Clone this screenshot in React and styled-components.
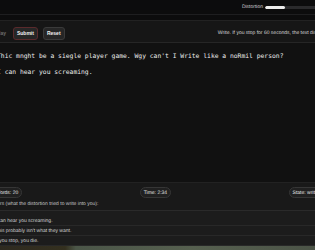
import React from 'react';
import styled, { createGlobalStyle } from 'styled-components';

const GlobalStyle = createGlobalStyle`
  html, body {
    margin: 0;
    padding: 0;
    background: #0c0c0d;
    overflow: hidden;
  }
  body {
    font-family: 'Liberation Sans', Arial, sans-serif;
    color: #e6e6e6;
    text-rendering: geometricPrecision;
  }
`;

const Viewport = styled.div`
  width: 315px;
  height: 250px;
  overflow: hidden;
`;

const Page = styled.div`
  width: 355px;
  margin-left: -20px;
  display: flex;
  flex-direction: column;
`;

const Header = styled.header`
  height: 15px;
  box-sizing: border-box;
  display: flex;
  align-items: center;
  justify-content: flex-end;
  border-bottom: 1px solid #1e1e20;
`;

const DialLabel = styled.span`
  font-size: 5px;
  color: #cfcfcf;
  margin-right: 2px;
`;

const Track = styled.div`
  width: 70px;
  height: 3px;
  border-radius: 2px;
  background: #2a2a2c;
  overflow: hidden;
`;

const Fill = styled.div`
  height: 100%;
  border-radius: 2px;
  background: #ececec;
`;

const Panel = styled.main`
  margin-top: 5px;
  border-top: 1px solid #222;
  background: #111111;
  display: flex;
  flex-direction: column;
`;

const Toolbar = styled.div`
  height: 22px;
  box-sizing: border-box;
  display: flex;
  align-items: center;
  gap: 5px;
  padding: 3.5px 3px 0 13.7px;
  background: #161616;
  border-bottom: 1px solid #262626;
`;

const Button = styled.button`
  height: 13px;
  box-sizing: border-box;
  display: flex;
  align-items: center;
  padding: 0 ${(p) => (p.$ghost ? '2px' : '3px')};
  border-radius: 3px;
  font-family: 'Liberation Sans', Arial, sans-serif;
  font-size: 5px;
  font-weight: 700;
  color: ${(p) => (p.$ghost ? '#6f6f6f' : '#f2f2f2')};
  background: ${(p) => (p.$ghost ? 'transparent' : '#262626')};
  border: ${(p) => (p.$ghost ? 'none' : `1px solid ${p.$border || '#3a3a3a'}`)};
`;

const Hint = styled.span`
  margin-left: auto;
  font-size: 5px;
  color: #d6d6d6;
  white-space: nowrap;
`;

const Editor = styled.div`
  height: 139px;
  box-sizing: border-box;
  padding: 9.5px 0 0 17px;
  font-family: 'DejaVu Sans Mono', 'Liberation Mono', monospace;
  font-size: 6.35px;
  line-height: 8.35px;
  color: #ececec;
  white-space: pre-wrap;
`;

const Stats = styled.div`
  background: #191919;
  border-top: 1px solid #222;
  padding-top: 4px;
`;

const PillRow = styled.div`
  display: flex;
  justify-content: space-between;
  padding: 0 10px 0 12px;
`;

const Pill = styled.span`
  height: 11px;
  box-sizing: border-box;
  display: flex;
  align-items: center;
  padding: 0 2.5px;
  border-radius: 6px;
  font-size: 5px;
  color: #e6e6e6;
  background: #202020;
  border: 1px solid #363636;
`;

const Caption = styled.div`
  font-size: 5px;
  color: #c4c4c4;
  height: 12px;
  display: flex;
  align-items: center;
  padding-left: 3.3px;
`;

const Whispers = styled.ul`
  list-style: none;
  margin: 0;
  padding: 5px 0 0;
  background: #1c1c1c;
  border-top: 1px solid #2a2a2a;
`;

const Whisper = styled.li`
  height: 10px;
  box-sizing: border-box;
  display: flex;
  align-items: center;
  padding-left: 15px;
  font-size: 5px;
  color: #d2d2d2;
  border-bottom: 1px solid #282828;
`;

const Backdrop = styled.div`
  height: 10px;
  background: linear-gradient(90deg, #2c2820 0%, #34301f 24%, #4b5648 27%, #56604f 60%, #4a5246 100%);
`;

const whispers = [
  'I can hear you screaming.',
  "This probably isn't what they want.",
  'If you stop, you die.',
];

const App = () => {
  return (
    <Viewport>
      <GlobalStyle />
      <Page>
        <Header>
          <DialLabel>Distortion</DialLabel>
          <Track>
            <Fill style={{ width: `${0.29 * 100}%` }} />
          </Track>
        </Header>
        <Panel>
          <Toolbar>
            <Button $ghost>Play</Button>
            <Button $border="#5a2a2c">Submit</Button>
            <Button>Reset</Button>
            <Hint>Write. If you stop for 60 seconds, the text dissolves.</Hint>
          </Toolbar>
          <Editor>
            {"Thic mnght be a siegle player game. Wgy can't I Write like a noRmil person?\n\nI can hear you screaming."}
          </Editor>
          <Stats>
            <PillRow>
              <Pill>Words: 20</Pill>
              <Pill>Time: 2:34</Pill>
              <Pill>State: writing</Pill>
            </PillRow>
            <Caption>Whispers (what the distortion tried to write into you):</Caption>
          </Stats>
          <Whispers>
            {whispers.map((w) => (
              <Whisper key={w}>{w}</Whisper>
            ))}
          </Whispers>
          <Backdrop />
        </Panel>
      </Page>
    </Viewport>
  );
};

export default App;
